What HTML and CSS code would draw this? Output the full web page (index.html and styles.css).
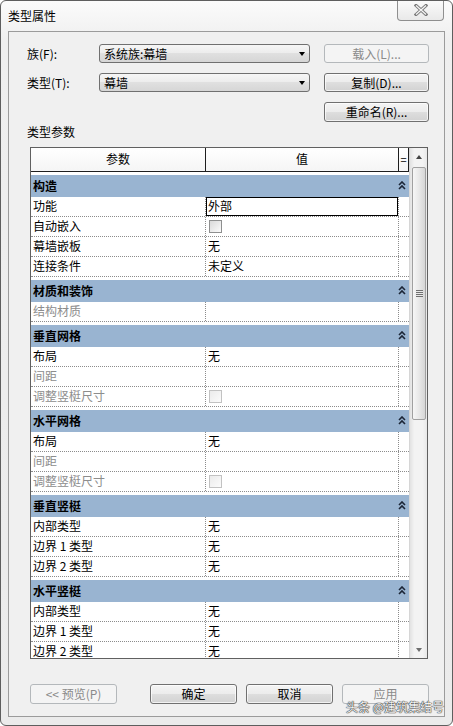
FILE: index.html
```html
<!DOCTYPE html>
<html lang="zh-CN">
<head>
<meta charset="utf-8">
<title>类型属性</title>
<link rel="stylesheet" href="styles.css">
</head>
<body>
<div class="window">
  <div class="titlebar">
    <span class="title">类型属性</span>
    <div class="close">
      <svg width="14" height="12" viewBox="0 0 14 12"><path d="M2 1.5 L12 10.5 M12 1.5 L2 10.5" stroke="#7c7c7c" stroke-width="3.2" stroke-linecap="square" fill="none"/><path d="M2 1.5 L12 10.5 M12 1.5 L2 10.5" stroke="#f6f6f6" stroke-width="1.2" fill="none"/></svg>
    </div>
  </div>
  <div class="client">
    <div class="form">
      <span class="lbl">族(F):</span>
      <div class="combo"><span class="combo-text">系统族:幕墙</span><i class="arrow"></i></div>
      <button class="btn disabled">载入(L)...</button>
      <span class="lbl">类型(T):</span>
      <div class="combo"><span class="combo-text">幕墙</span><i class="arrow"></i></div>
      <button class="btn">复制(D)...</button>
      <button class="btn rename">重命名(R)...</button>
    </div>
    <div class="params-label">类型参数</div>
    <div class="table">
      <div class="grid">
        <div class="head">
          <div class="c1">参数</div>
          <div class="c2">值</div>
          <div class="c3">=</div>
        </div>
        <div class="body">
          <div class="sec"><span>构造</span><svg class="chev" width="8" height="9" viewBox="0 0 8 9"><path d="M1 4 L4 1 L7 4 M1 8 L4 5 L7 8" stroke="#1b2536" stroke-width="1.6" fill="none"/></svg></div>
          <div class="row"><div class="c1">功能</div><div class="c2"><div class="edit">外部</div></div><div class="c3"></div></div>
          <div class="row"><div class="c1">自动嵌入</div><div class="c2"><span class="chk"></span></div><div class="c3"></div></div>
          <div class="row"><div class="c1">幕墙嵌板</div><div class="c2">无</div><div class="c3"></div></div>
          <div class="row"><div class="c1">连接条件</div><div class="c2">未定义</div><div class="c3"></div></div>

          <div class="sec"><span>材质和装饰</span><svg class="chev" width="8" height="9" viewBox="0 0 8 9"><path d="M1 4 L4 1 L7 4 M1 8 L4 5 L7 8" stroke="#1b2536" stroke-width="1.6" fill="none"/></svg></div>
          <div class="row dis"><div class="c1">结构材质</div><div class="c2"></div><div class="c3"></div></div>

          <div class="sec"><span>垂直网格</span><svg class="chev" width="8" height="9" viewBox="0 0 8 9"><path d="M1 4 L4 1 L7 4 M1 8 L4 5 L7 8" stroke="#1b2536" stroke-width="1.6" fill="none"/></svg></div>
          <div class="row"><div class="c1">布局</div><div class="c2">无</div><div class="c3"></div></div>
          <div class="row dis"><div class="c1">间距</div><div class="c2"></div><div class="c3"></div></div>
          <div class="row dis"><div class="c1">调整竖梃尺寸</div><div class="c2"><span class="chk off"></span></div><div class="c3"></div></div>

          <div class="sec"><span>水平网格</span><svg class="chev" width="8" height="9" viewBox="0 0 8 9"><path d="M1 4 L4 1 L7 4 M1 8 L4 5 L7 8" stroke="#1b2536" stroke-width="1.6" fill="none"/></svg></div>
          <div class="row"><div class="c1">布局</div><div class="c2">无</div><div class="c3"></div></div>
          <div class="row dis"><div class="c1">间距</div><div class="c2"></div><div class="c3"></div></div>
          <div class="row dis"><div class="c1">调整竖梃尺寸</div><div class="c2"><span class="chk off"></span></div><div class="c3"></div></div>

          <div class="sec"><span>垂直竖梃</span><svg class="chev" width="8" height="9" viewBox="0 0 8 9"><path d="M1 4 L4 1 L7 4 M1 8 L4 5 L7 8" stroke="#1b2536" stroke-width="1.6" fill="none"/></svg></div>
          <div class="row"><div class="c1">内部类型</div><div class="c2">无</div><div class="c3"></div></div>
          <div class="row"><div class="c1">边界 1 类型</div><div class="c2">无</div><div class="c3"></div></div>
          <div class="row"><div class="c1">边界 2 类型</div><div class="c2">无</div><div class="c3"></div></div>

          <div class="sec"><span>水平竖梃</span><svg class="chev" width="8" height="9" viewBox="0 0 8 9"><path d="M1 4 L4 1 L7 4 M1 8 L4 5 L7 8" stroke="#1b2536" stroke-width="1.6" fill="none"/></svg></div>
          <div class="row"><div class="c1">内部类型</div><div class="c2">无</div><div class="c3"></div></div>
          <div class="row"><div class="c1">边界 1 类型</div><div class="c2">无</div><div class="c3"></div></div>
          <div class="row"><div class="c1">边界 2 类型</div><div class="c2">无</div><div class="c3"></div></div>
        </div>
      </div>
      <div class="vscroll">
        <div class="sb-btn"><i class="up"></i></div>
        <div class="thumb"><i class="grip"></i></div>
        <div class="sb-btn down"><i class="dn"></i></div>
      </div>
    </div>
    <div class="footer">
      <button class="btn disabled preview">&lt;&lt; 预览(P)</button>
      <button class="btn">确定</button>
      <button class="btn">取消</button>
      <button class="btn disabled">应用</button>
    </div>
  </div>
  <div class="watermark">头条 @建筑集结号</div>
</div>
</body>
</html>
```

FILE: styles.css
```css
* { box-sizing: border-box; }
html, body { margin: 0; padding: 0; }
body {
  width: 453px;
  height: 726px;
  overflow: hidden;
  background: #ffffff;
  font-family: "Noto Sans CJK SC", "Noto Sans", sans-serif;
  font-size: 12px;
  color: #000;
}
.window {
  position: relative;
  width: 453px;
  height: 726px;
  border: 1px solid #5e5e5e;
  border-radius: 6px;
  background: linear-gradient(#fbfbfb, #efefef 40px, #ebebeb);
  display: flex;
  flex-direction: column;
  overflow: hidden;
}
.titlebar {
  height: 30px;
  flex: none;
  display: flex;
  align-items: flex-start;
  padding-left: 7px;
}
.title { line-height: 30px; font-size: 12px; color: #000; }
.close {
  margin-left: auto;
  margin-right: 8px;
  margin-top: -1px;
  width: 47px;
  height: 21px;
  border: 1px solid #8f8f8f;
  border-top: none;
  border-radius: 0 0 4px 4px;
  background: linear-gradient(#fbfbfb, #e9e9e9);
  display: flex;
  align-items: center;
  justify-content: center;
}
.client {
  margin: 0 7px;
  height: 686px;
  flex: none;
  border: 1px solid #9b9b9b;
  background: #f0f0f0;
  display: flex;
  flex-direction: column;
}
.form {
  display: grid;
  grid-template-columns: 58px 211px 105px;
  grid-template-rows: 19px 19px 20px;
  column-gap: 14px;
  row-gap: 10px;
  padding: 12px 0 0 18px;
}
.lbl { line-height: 19px; }
.rename { grid-column: 3; grid-row: 3; }
.combo {
  border: 1px solid #707070;
  border-radius: 3px;
  background: linear-gradient(#f6f6f6, #ececec 50%, #e0e0e0 50%, #d6d6d6);
  display: flex;
  align-items: center;
  padding: 0 4px 0 4px;
}
.combo-text { flex: 1; line-height: 17px; }
.arrow {
  width: 0;
  height: 0;
  border-top: 4px solid #000;
  border-left: 3.5px solid transparent;
  border-right: 3.5px solid transparent;
}
.btn {
  font: inherit;
  font-size: 12px;
  color: #000;
  height: 20px;
  padding: 0;
  line-height: 18px;
  border: 1px solid #707070;
  border-radius: 3px;
  background: linear-gradient(#f4f4f4, #ececec 50%, #dedede 50%, #d2d2d2);
  box-shadow: inset 0 0 0 1px rgba(255, 255, 255, 0.7);
}
.form .btn { height: auto; }
.btn.disabled {
  border-color: #b4b8bb;
  background: #f4f4f4;
  color: #8a8a8a;
  box-shadow: none;
}
.params-label {
  padding-left: 18px;
  margin-top: 2px;
  height: 16px;
  line-height: 16px;
  margin-bottom: 7px;
}
.table {
  margin-left: 21px;
  width: 398px;
  height: 512px;
  flex: none;
  border: 1px solid #606060;
  background: #fff;
  display: flex;
}
.grid {
  width: 378px;
  display: flex;
  flex-direction: column;
}
.head {
  display: flex;
  height: 24px;
  flex: none;
  border-bottom: 1px solid #1e1e1e;
  background: linear-gradient(#ffffff, #f5f5f5);
  line-height: 22px;
  text-align: center;
}
.head .c1 { width: 175px; border-right: 1px solid #1e1e1e; }
.head .c2 { width: 193px; border-right: 1px solid #1e1e1e; }
.head .c3 { width: 10px; border-right: 1px solid #1e1e1e; font-size: 11px; }
.body { flex: 1; overflow: hidden; }
.sec {
  margin-top: 3px;
  height: 22px;
  background: #99b4d1;
  display: flex;
  align-items: center;
  justify-content: space-between;
  padding: 0 3px 1px 2px;
  font-weight: bold;
}
.chev { display: block; }
.row {
  display: flex;
  height: 20px;
  border-bottom: 1px dotted #8c8c8c;
  line-height: 18px;
}
.row .c1 { width: 175px; border-right: 1px dotted #8c8c8c; padding-left: 2px; }
.row .c2 { width: 193px; border-right: 1px dotted #8c8c8c; padding-left: 2px; }
.row .c3 { width: 10px; }
.row.dis .c1 { color: #8d8d8d; }
.row .c2:has(.edit) { padding-left: 0; }
.edit {
  width: 192px;
  height: 19px;
  border: 1px solid #000;
  padding-left: 1px;
  line-height: 16px;
}
.chk {
  display: block;
  width: 13px;
  height: 13px;
  margin: 3px 0 0 1px;
  border: 1px solid #8e8f8f;
  background: linear-gradient(135deg, #d9d9d9, #fbfbfb);
}
.chk.off { border-color: #c2c2c2; background: linear-gradient(135deg, #ebebeb, #fbfbfb); }
.vscroll {
  width: 18px;
  display: flex;
  flex-direction: column;
  background: linear-gradient(to right, #e2e2e2, #f3f3f3 25%, #f3f3f3 75%, #e8e8e8);
  border-left: 1px solid #d6d6d6;
}
.sb-btn {
  height: 17px;
  flex: none;
  display: flex;
  align-items: center;
  justify-content: center;
}
.sb-btn.down { margin-top: auto; }
.up {
  width: 0; height: 0;
  border-bottom: 4px solid #444;
  border-left: 3.5px solid transparent;
  border-right: 3.5px solid transparent;
}
.dn {
  width: 0; height: 0;
  border-top: 4px solid #6e6e6e;
  border-left: 3.5px solid transparent;
  border-right: 3.5px solid transparent;
}
.thumb {
  margin: 2px 1px 0 2px;
  height: 253px;
  flex: none;
  border: 1px solid #a0a0a0;
  border-radius: 2px;
  background: linear-gradient(to right, #f6f6f6, #e8e8e8 50%, #d6d6d6);
  display: flex;
  align-items: center;
  justify-content: center;
}
.grip {
  width: 7px;
  height: 7px;
  background: repeating-linear-gradient(#707070 0 1px, #e8e8e8 1px 2px);
}
.footer {
  margin-top: 25px;
  display: flex;
  gap: 9px;
  padding-left: 21px;
}
.footer .btn { width: 87px; }
.footer .preview { margin-right: 24px; }
.watermark {
  position: absolute;
  right: 8px;
  bottom: 11px;
  font-size: 12px;
  line-height: 14px;
  color: #f2f2f2;
  text-shadow: 0 0 1px #333, 0 0 1px #333, 0 0 1px #333;
}
```
